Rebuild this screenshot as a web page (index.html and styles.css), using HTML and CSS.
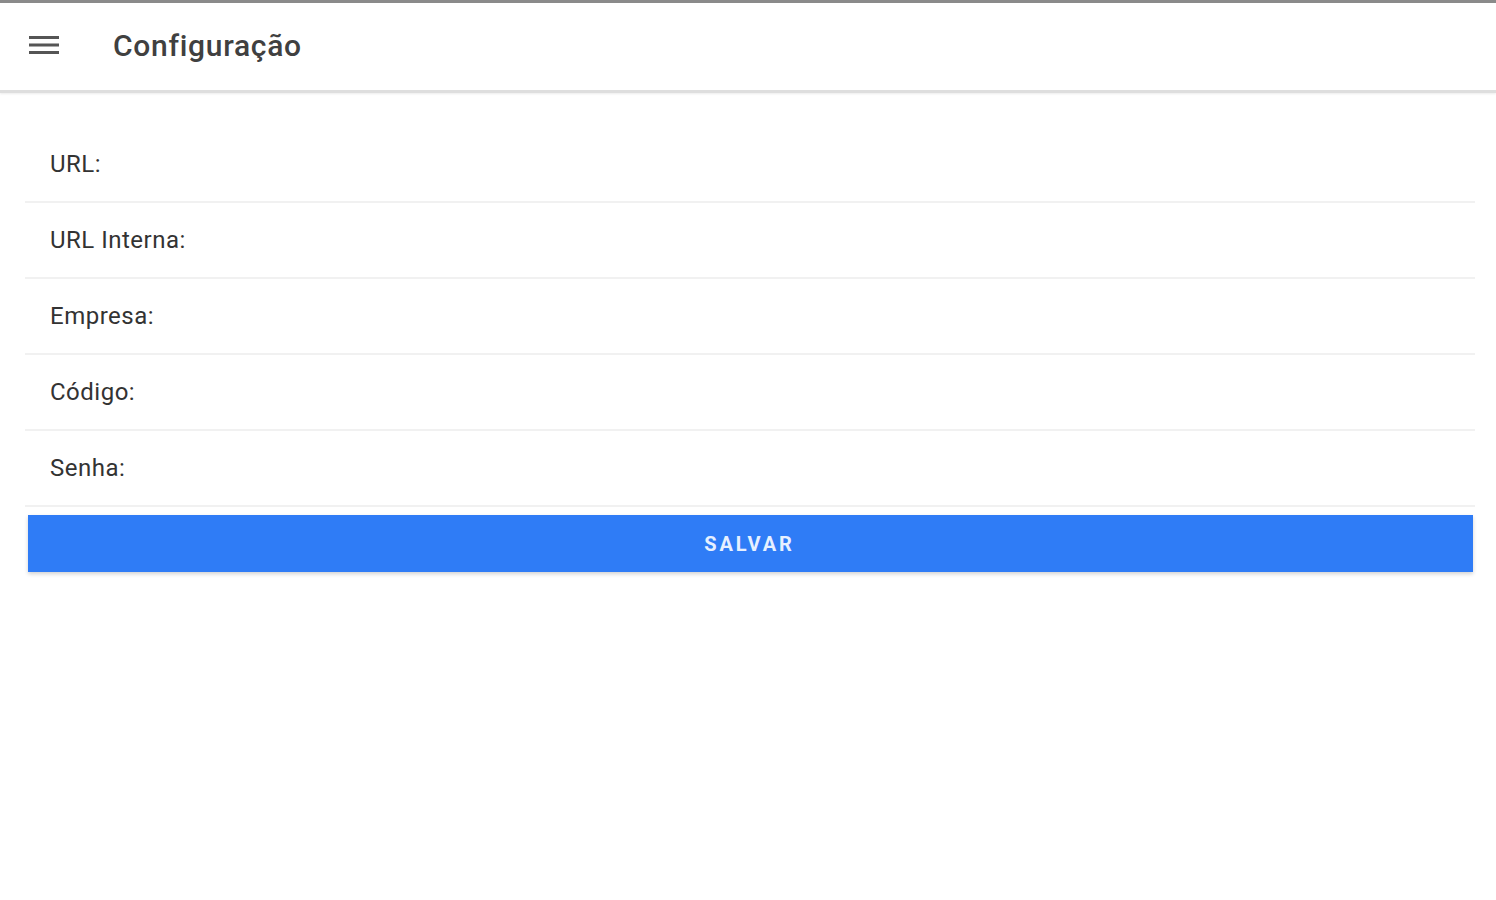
FILE: index.html
```html
<html>
<head>
<meta charset="utf-8">
<title>Configuração</title>
<link rel="stylesheet" href="styles.css">
</head>
<body>

<div id="topbar">
	<span class="menuIcon">
		<svg width="30" height="20" viewBox="0 0 30 20">
			<rect x="0" y="1" width="30" height="3" fill="#555"></rect>
			<rect x="0" y="8.5" width="30" height="3" fill="#555"></rect>
			<rect x="0" y="16" width="30" height="3" fill="#555"></rect>
		</svg>
	</span>
	<span class="title">Configuração</span>
</div>

<div id="content">
	<div class="field">URL:</div>
	<div class="field">URL Interna:</div>
	<div class="field">Empresa:</div>
	<div class="field">Código:</div>
	<div class="field">Senha:</div>
	<button class="saveButton">SALVAR</button>
</div>

</body>
</html>
```

FILE: styles.css
```css
body{
	margin: 0;
	font-family: Roboto, "Liberation Sans", sans-serif;
	background: #ffffff;
	color: #333333;
}
#topbar{
	display: flex;
	align-items: center;
	height: 87px;
	border-top: 3px solid #8a8a8a;
	border-bottom: 3px solid #dedede;
	box-shadow: 0 1px 2px rgba(0,0,0,0.08);
	padding-left: 29px;
	box-sizing: content-box;
}
.menuIcon{
	display: inline-block;
	width: 30px;
	height: 20px;
	margin-top: -4px;
}
.menuIcon svg{
	display: block;
}
.title{
	margin-left: 54px;
	font-size: 30px;
	font-weight: 500;
	color: #404040;
	letter-spacing: 0.7px;
	margin-top: -3px;
}
#content{
	display: flex;
	flex-direction: column;
	padding: 34px 21px 0 25px;
}
.field{
	height: 74px;
	display: flex;
	align-items: center;
	padding-left: 25px;
	font-size: 24px;
	letter-spacing: 0.5px;
	color: #333333;
	border-bottom: 2px solid #f1f1f1;
}
.saveButton{
	margin: 8px 2px 0 3px;
	height: 57px;
	border: none;
	background: #2f7cf6;
	color: #e6f0ff;
	font-family: Roboto, "Liberation Sans", sans-serif;
	font-size: 20px;
	font-weight: 700;
	letter-spacing: 2.9px;
	padding-left: 4px;
	box-shadow: 0 2px 4px rgba(0,0,0,0.18);
	cursor: pointer;
}
```
